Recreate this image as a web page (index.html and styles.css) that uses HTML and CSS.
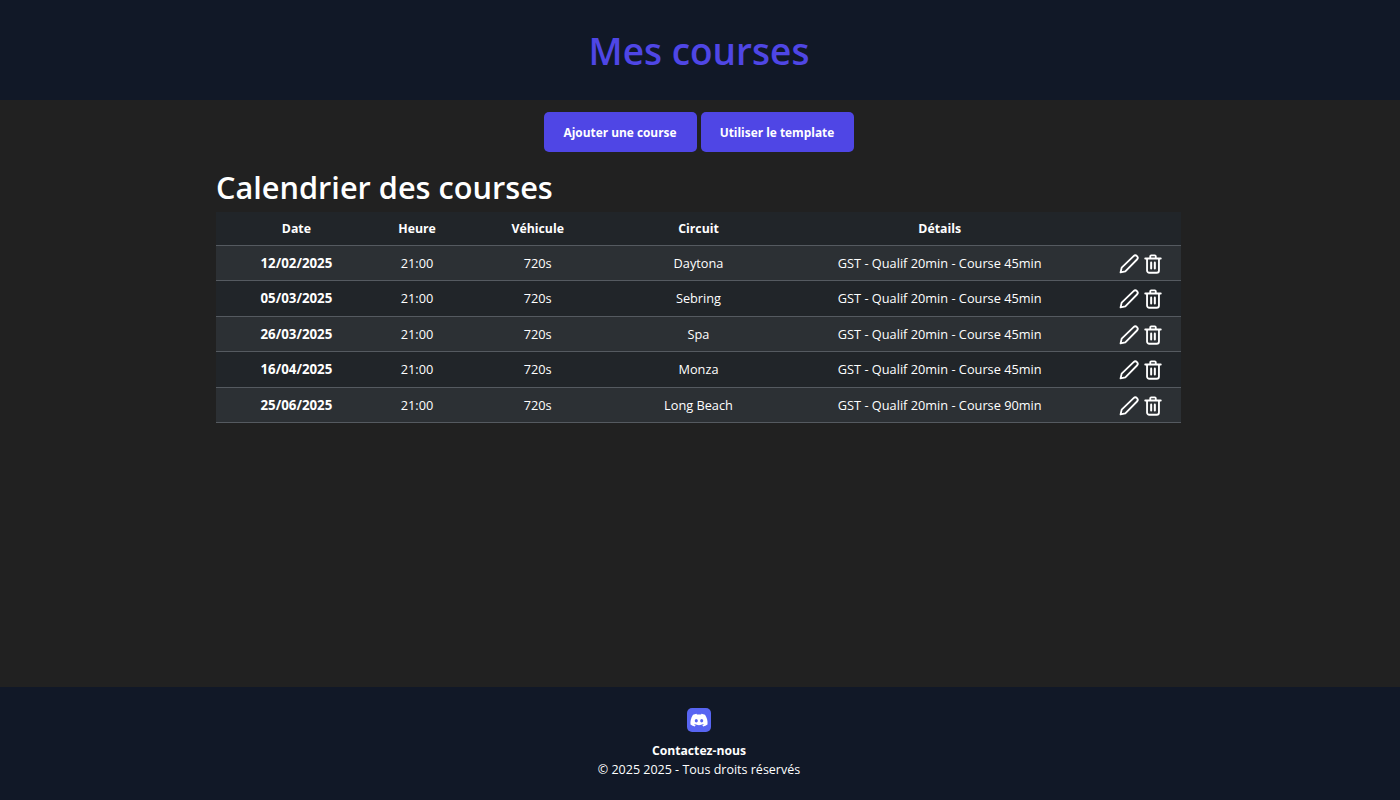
FILE: index.html
```html
<!DOCTYPE html>
<html lang="fr">
<head>
    <meta charset="UTF-8">
    <meta name="viewport" content="width=device-width, initial-scale=1.0">
    <title>Mes courses</title>
    <link rel="stylesheet" href="styles.css">
</head>
<body>
    <svg width="0" height="0" class="defs">
        <symbol id="icon-edit" viewBox="0 0 24 24">
            <path d="M17 3.400a2.600 2.600 0 0 1 3.700 3.700L8 20l-5.200 1.200L4 16z" fill="none" stroke="currentColor" stroke-width="2" stroke-linejoin="round"/>
        </symbol>
        <symbol id="icon-trash" viewBox="0 0 24 24">
            <path d="M3.500 6h17M9 6V3.500a1 1 0 0 1 1-1h4a1 1 0 0 1 1 1V6M5.500 6v13a2.500 2.500 0 0 0 2.500 2.500h8a2.500 2.500 0 0 0 2.500-2.500V6" fill="none" stroke="currentColor" stroke-width="2" stroke-linecap="round" stroke-linejoin="round"/>
            <path d="M10 10.500v6.500M14 10.500v6.500" fill="none" stroke="currentColor" stroke-width="2.200" stroke-linecap="round"/>
        </symbol>
    </svg>

    <header class="topbar">
        <h1>Mes courses</h1>
    </header>

    <main class="content">
        <div class="actions">
            <button class="btn">Ajouter une course</button>
            <button class="btn">Utiliser le template</button>
        </div>

        <section class="calendar">
            <h2>Calendrier des courses</h2>
            <table class="races">
                <colgroup>
                    <col class="c2"><col class="c1"><col class="c2"><col class="c2"><col class="c4"><col class="c1">
                </colgroup>
                <thead>
                    <tr><th>Date</th><th>Heure</th><th>Véhicule</th><th>Circuit</th><th>Détails</th><th></th></tr>
                </thead>
                <tbody>
                    <tr>
                        <td class="date">12/02/2025</td><td>21:00</td><td>720s</td><td>Daytona</td><td>GST - Qualif 20min - Course 45min</td>
                        <td class="tools"><svg class="icon"><use href="#icon-edit"/></svg><svg class="icon"><use href="#icon-trash"/></svg></td>
                    </tr>
                    <tr>
                        <td class="date">05/03/2025</td><td>21:00</td><td>720s</td><td>Sebring</td><td>GST - Qualif 20min - Course 45min</td>
                        <td class="tools"><svg class="icon"><use href="#icon-edit"/></svg><svg class="icon"><use href="#icon-trash"/></svg></td>
                    </tr>
                    <tr>
                        <td class="date">26/03/2025</td><td>21:00</td><td>720s</td><td>Spa</td><td>GST - Qualif 20min - Course 45min</td>
                        <td class="tools"><svg class="icon"><use href="#icon-edit"/></svg><svg class="icon"><use href="#icon-trash"/></svg></td>
                    </tr>
                    <tr>
                        <td class="date">16/04/2025</td><td>21:00</td><td>720s</td><td>Monza</td><td>GST - Qualif 20min - Course 45min</td>
                        <td class="tools"><svg class="icon"><use href="#icon-edit"/></svg><svg class="icon"><use href="#icon-trash"/></svg></td>
                    </tr>
                    <tr>
                        <td class="date">25/06/2025</td><td>21:00</td><td>720s</td><td>Long Beach</td><td>GST - Qualif 20min - Course 90min</td>
                        <td class="tools"><svg class="icon"><use href="#icon-edit"/></svg><svg class="icon"><use href="#icon-trash"/></svg></td>
                    </tr>
                </tbody>
            </table>
        </section>
    </main>

    <footer class="bottombar">
        <svg class="discord" viewBox="0 0 24 24">
            <rect width="24" height="24" rx="5" fill="#5865f2"/>
            <path d="M18 6.800a14 14 0 0 0-3.500-1.100l-.4.9a13 13 0 0 0-4.200 0l-.4-.9A14 14 0 0 0 6 6.800C3.800 10.100 3.200 13.300 3.500 16.500a14 14 0 0 0 4.300 2.100l.9-1.500-1.500-.7.4-.3a10 10 0 0 0 8.800 0l.4.300-1.500.7.9 1.500a14 14 0 0 0 4.300-2.100c.4-3.700-.6-6.900-2.500-9.700zM9.300 14.500c-.8 0-1.500-.8-1.500-1.700s.7-1.700 1.500-1.700 1.500.8 1.500 1.700-.7 1.700-1.500 1.700zm5.400 0c-.8 0-1.500-.8-1.500-1.700s.7-1.700 1.500-1.700 1.500.8 1.500 1.700-.7 1.700-1.500 1.700z" fill="#fff"/>
        </svg>
        <p class="contact">Contactez-nous</p>
        <p class="copy">© 2025 2025 - Tous droits réservés</p>
    </footer>
</body>
</html>
```

FILE: styles.css
```css
* {
    box-sizing: border-box;
}
body {
    margin: 0;
    height: 800px;
    display: flex;
    flex-direction: column;
    background-color: #212121;
    color: #fff;
    font-family: "Open Sans", "Noto Sans", sans-serif;
    font-size: 12.75px;
}
.defs {
    display: block;
    height: 0;
}
.topbar {
    height: 100px;
    padding-right: 2px;
    background-color: #111827;
    display: flex;
    align-items: center;
    justify-content: center;
}
.topbar h1 {
    margin: 0;
    font-size: 37px;
    font-weight: 600;
    color: #4f46e5;
}
.content {
    flex: 1;
    padding: 12px 3px 0 0;
}
.actions {
    display: flex;
    justify-content: center;
    gap: 4px;
}
.btn {
    height: 40px;
    width: 153px;
    padding: 0;
    border: 0;
    border-radius: 5px;
    background-color: #4f46e5;
    color: #fff;
    font-family: inherit;
    font-size: 11.9px;
    font-weight: 700;
}
.calendar {
    width: 965px;
    margin: 15px auto 0;
}
.calendar h2 {
    margin: 0;
    height: 45px;
    line-height: 41px;
    font-size: 30.7px;
    font-weight: 600;
}
.races {
    width: 100%;
    border-collapse: collapse;
    table-layout: fixed;
}
.c1 {
    width: 8.333%;
}
.c2 {
    width: 16.667%;
}
.c4 {
    width: 33.333%;
}
.races th {
    height: 33px;
    background-color: #212529;
    font-size: 12.3px;
    font-weight: 700;
    border-bottom: 1px solid #555a60;
}
.races td {
    height: 35.5px;
    padding: 0 0 0.5px;
    text-align: center;
    border-bottom: 1px solid #555a60;
}
.races tbody tr:nth-child(odd) {
    background-color: #2c3034;
}
.races tbody tr:nth-child(even) {
    background-color: #212529;
}
.races .date {
    font-size: 13.3px;
    font-weight: 700;
}
.races .tools {
    text-align: left;
    padding: 2px 0 0 17px;
}
.icon {
    width: 22px;
    height: 22px;
    margin-right: 2px;
    vertical-align: middle;
}
.bottombar {
    height: 113px;
    padding: 21px 2px 0 0;
    background-color: #111827;
    display: flex;
    flex-direction: column;
    align-items: center;
}
.discord {
    width: 24px;
    height: 24px;
}
.bottombar p {
    margin: 0;
}
.contact {
    margin-top: 10px !important;
    line-height: 18px;
    font-size: 12.2px;
    font-weight: 700;
}
.copy {
    line-height: 20px;
    font-size: 12.5px;
}
```
